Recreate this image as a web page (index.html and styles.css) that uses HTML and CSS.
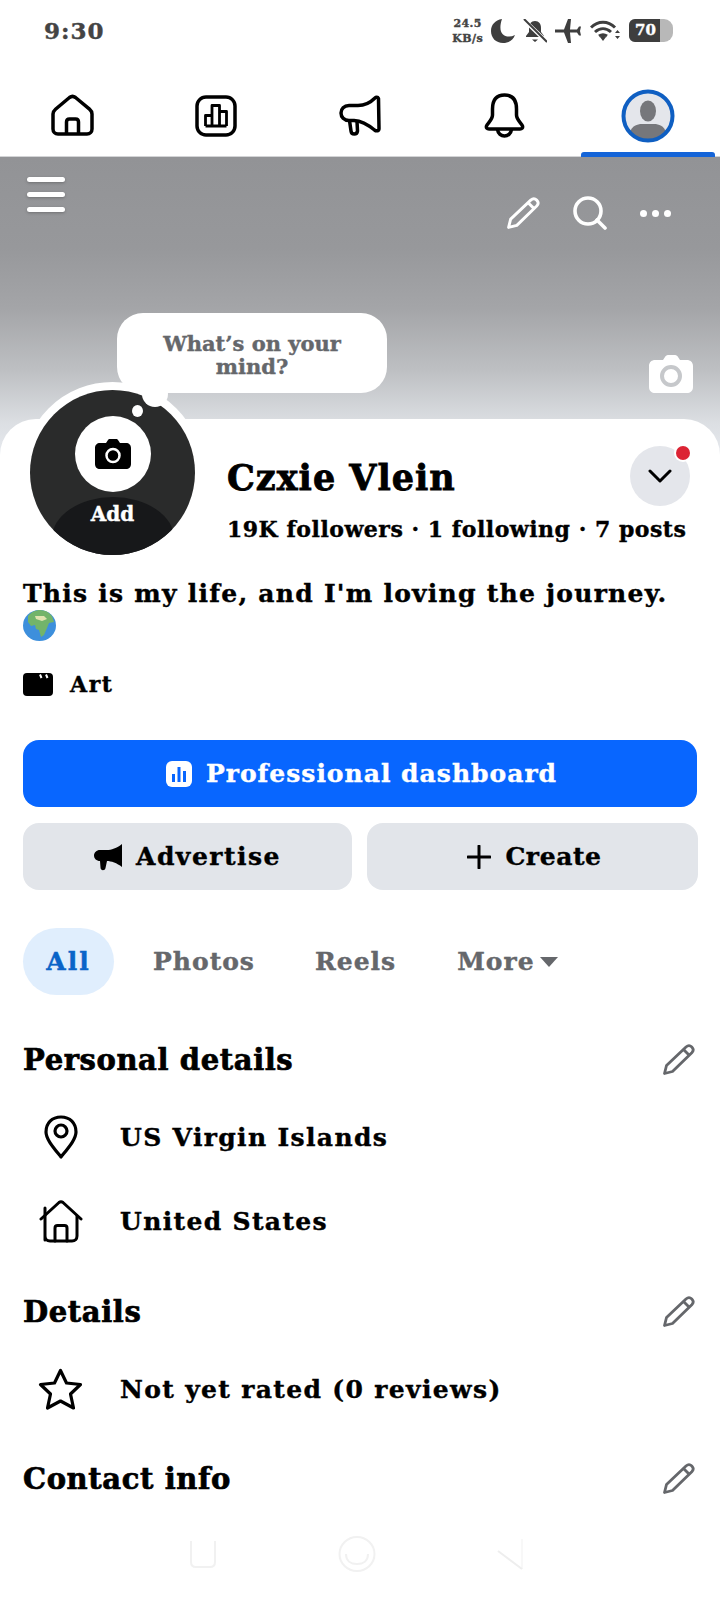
FILE: index.html
```html
<!DOCTYPE html>
<html lang="en">
<head>
  <meta charset="UTF-8">
  <title>Czxie Vlein</title>
  <link rel="stylesheet" href="styles.css">
</head>
<body>
  <svg class="defs" width="0" height="0">
    <symbol id="pencil" viewBox="0 0 33 32">
      <path d="M2.5 29.5 4.500 21.500 24 3c2-1.800 4-1.800 5.800 0s1.800 3.900 0 5.800L10.500 27.500z" fill="none" stroke="currentColor" stroke-width="2.800" stroke-linejoin="round"/>
      <path d="M21.500 5.500l6 6" fill="none" stroke="currentColor" stroke-width="2.800"/>
    </symbol>
  </svg>

  <div class="status-bar">
    <span class="clock">9:30</span>
    <div class="status-icons">
      <span class="net-speed">24.5<br>KB/s</span>
      <svg width="24" height="24" viewBox="0 0 24 24"><path d="M11 0C4 1 0 6 0 12c0 7 5 12 12 12 6 0 10-3 12-8-2 1-4 1.500-6 1.500C11 17.500 7 12 11 0z" fill="#3e3e3e"/></svg>
      <svg width="24" height="24" viewBox="0 0 24 24"><path d="M12 2c-4 0-6 3-6 7v4l-3 4v1h18v-1l-3-4V9c0-4-2-7-6-7zM9 20.500h6L12 23z" fill="#3e3e3e"/><path d="M1 1l22 21" stroke="#fff" stroke-width="4"/><path d="M1 0l23 23" stroke="#3e3e3e" stroke-width="2"/></svg>
      <svg width="27" height="24" viewBox="0 0 27 24"><path d="M0 10.500h9L13 0h3l-1 10.500h7l2-3h2l-1 4.500 1 4.500h-2l-2-3h-7L16 24h-3L9 13.500H0z" fill="#3e3e3e"/></svg>
      <svg width="31" height="22" viewBox="0 0 31 22"><path d="M1 7.500c7-7 17-7 24 0M5 12c5-4.500 11-4.500 16 0M9 16c3-2 5-2 8 0" fill="none" stroke="#3e3e3e" stroke-width="3"/><path d="M10 17l3-2 3 2-3 4zM25 13l2.500-3 2.500 3zM25 16h5l-2.500 3z" fill="#3e3e3e"/></svg>
      <span class="battery"><span class="battery-level">70</span></span>
    </div>
  </div>

  <nav class="tab-bar">
    <a class="tab">
      <svg width="43" height="43" viewBox="0 0 43 43" fill="none" stroke="#000" stroke-width="3.500" stroke-linejoin="round"><path d="M2 20c0-2 1-3.500 2.500-4.800L18.500 3.500c1.700-1.300 4.300-1.300 6 0l14 11.700c1.500 1.300 2.500 2.800 2.500 4.800v15c0 3-2 5-5 5H7c-3 0-5-2-5-5z"/><path d="M15.500 40V28c0-1.800 1.200-3 3-3h6c1.800 0 3 1.200 3 3v12"/></svg>
    </a>
    <a class="tab">
      <svg width="42" height="42" viewBox="0 0 42 42" fill="none" stroke="#000"><rect x="2" y="2" width="38" height="38" rx="9" stroke-width="3.500"/><path d="M10.500 31V20.500h6.500V31M17 31V10.500h7.500V31M24.500 31V16.500h7V31M10.500 31h21" stroke-width="2.800" stroke-linejoin="round"/></svg>
    </a>
    <a class="tab">
      <svg width="43" height="41" viewBox="0 0 43 41" fill="none" stroke="#000" stroke-width="3.500" stroke-linejoin="round"><path d="M39.500 3.500c-.8-1.500-2.500-1.500-3.500-.5-5 5-11 7.500-17 7.500H10C5 10.500 2 14 2 18s3 7.500 8 7.500h5c8 .5 15 5 20.500 9.500 2 1.500 4.500 1 4.500-1.500z"/><path d="M10.500 25.500 12 36c.5 4 6 4 6.500 0l-.5-9.800"/></svg>
    </a>
    <a class="tab">
      <svg width="41" height="45" viewBox="0 0 41 45" fill="none" stroke="#000" stroke-width="3.500" stroke-linejoin="round"><path d="M20.500 2C11 2 8.500 9 8.500 16v6c0 5-5 8-6 11-.5 1.800.5 3 2.500 3h31c2 0 3-1.200 2.500-3-1-3-6-6-6-11v-6c0-7-2.500-14-12-14z"/><path d="M13.500 36.500c1 8.500 13 8.500 14 0"/></svg>
    </a>
    <a class="tab tab-active">
      <svg width="54" height="54" viewBox="0 0 54 54"><circle cx="27" cy="27" r="24" fill="#e4e6eb"/><ellipse cx="27" cy="22" rx="8" ry="10.500" fill="#76777b"/><path d="M9 43c2-6 7-8 12-8h12c5 0 10 2 12 8-5 5-11 8-18 8S14 48 9 43z" fill="#76777b"/><circle cx="27" cy="27" r="24.500" fill="none" stroke="#0f5fc2" stroke-width="4"/></svg>
    </a>
  </nav>

  <header class="cover">
    <div class="cover-tools">
      <div class="menu-lines"><i></i><i></i><i></i></div>
      <div class="cover-actions">
        <svg class="icon-white" width="34" height="33"><use href="#pencil"/></svg>
        <svg width="34" height="34" viewBox="0 0 34 34" fill="none" stroke="#fff" stroke-width="3.600"><circle cx="15" cy="15" r="13"/><path d="M24 24l8 8" stroke-linecap="round"/></svg>
        <div class="more-dots"><i></i><i></i><i></i></div>
      </div>
    </div>
    <div class="thought-bubble">What’s on your mind?</div>
    <svg class="cover-camera" width="44" height="38" viewBox="0 0 44 38"><path d="M6 5h8l2-3c.5-1 1.500-2 3-2h7c1.500 0 2.500 1 3 2l2 3h7c3 0 6 2 6 6v21c0 4-3 6-6 6H6c-3 0-6-2-6-6V11c0-4 3-6 6-6z" fill="#fff"/><circle cx="22" cy="21" r="9" fill="none" stroke="#c6c8cb" stroke-width="4"/></svg>
  </header>

  <main class="sheet">
    <section class="profile-head">
      <div class="avatar-ring">
        <div class="avatar">
          <div class="avatar-camera">
            <svg width="36" height="30" viewBox="0 0 36 30"><path d="M5 4h6l2-3c.5-.7 1-1 2-1h6c1 0 1.500.3 2 1l2 3h6c3 0 5 2 5 5v16c0 3-2 5-5 5H5c-3 0-5-2-5-5V9c0-3 2-5 5-5z" fill="#000"/><circle cx="18" cy="16.500" r="6.500" fill="none" stroke="#fff" stroke-width="2.500"/></svg>
          </div>
          <div class="avatar-add">Add</div>
        </div>
        <span class="bubble-tail"></span>
        <span class="bubble-dot"></span>
      </div>
      <div class="profile-info">
        <div class="name-row">
          <h1 class="name">Czxie Vlein</h1>
          <div class="chevron-btn">
            <svg width="24" height="14" viewBox="0 0 24 14" fill="none" stroke="#000" stroke-width="3" stroke-linecap="round" stroke-linejoin="round"><path d="M2 2l10 10L22 2"/></svg>
            <span class="red-dot"></span>
          </div>
        </div>
        <p class="stats">19K followers · 1 following · 7 posts</p>
      </div>
    </section>

    <p class="bio">This is my life, and I'm loving the journey.
      <svg class="globe" width="33" height="31" viewBox="0 0 33 31"><ellipse cx="16.500" cy="15.500" rx="16.500" ry="15.500" fill="#3d8fdc"/><path d="M5 6c3-4 8-6 12-6 5 0 9 2 12 6l2 6-5 1-2 5-3 7-3 2-2-7-3-1-1-4-4 1-3-4z" fill="#72b46a"/><path d="M12 6h9l3 3-5 2-6-2z" fill="#dfe3b0"/></svg>
    </p>

    <div class="category">
      <svg width="30" height="23" viewBox="0 0 30 23"><rect width="30" height="23" rx="4" fill="#000"/><path d="M17 1.500l1.500 3.500M23 1.500l1.500 3.500" stroke="#fff" stroke-width="2"/></svg>
      <span>Art</span>
    </div>

    <a class="btn btn-primary">
      <svg width="26" height="26" viewBox="0 0 26 26"><rect width="26" height="26" rx="6" fill="#fff"/><path d="M6 13h3v8H6zM11.500 6h3v15h-3zM17 10h3v11h-3z" fill="#0866ff"/></svg>
      Professional dashboard
    </a>

    <div class="btn-row">
      <a class="btn btn-grey btn-wide">
        <svg width="28" height="28" viewBox="0 0 28 28"><path d="M28 1v23c-5-4-11-6-15-6H6c-3.500 0-6-2.500-6-5.500S2.500 7 6 7h7c4 0 10-2 15-6zM6 18h7l-1.500 7c-.5 3-5 3-5-.5z" fill="#000"/></svg>
        Advertise
      </a>
      <a class="btn btn-grey btn-tight">
        <svg width="24" height="24" viewBox="0 0 24 24"><path d="M12 1v22M1 12h22" stroke="#000" stroke-width="3" stroke-linecap="round"/></svg>
        Create
      </a>
    </div>

    <div class="filters">
      <a class="filter filter-on">All</a>
      <a class="filter">Photos</a>
      <a class="filter">Reels</a>
      <a class="filter filter-more">More<span class="caret"></span></a>
    </div>

    <div class="section-head section-personal">
      <h2>Personal details</h2>
      <svg class="icon-grey" width="33" height="32"><use href="#pencil"/></svg>
    </div>
    <div class="detail-row">
      <span class="detail-icon">
        <svg width="34" height="44" viewBox="0 0 34 44" fill="none" stroke="#000" stroke-width="3.200"><path d="M17 42C9 32 2 24 2 17 2 8 8 2 17 2s15 6 15 15c0 7-7 15-15 25z" stroke-linejoin="round"/><circle cx="17" cy="16" r="6"/></svg>
      </span>
      <span>US Virgin Islands</span>
    </div>
    <div class="detail-row">
      <span class="detail-icon">
        <svg width="44" height="43" viewBox="0 0 44 43" fill="none" stroke="#000" stroke-width="3" stroke-linejoin="round" stroke-linecap="round"><path d="M2 19 20 2.500c1.300-1 2.700-1 4 0L42 19"/><path d="M6 8v32M6 16v20c0 3 2 5 5 5h22c3 0 5-2 5-5V16"/><path d="M16 41V28c0-1.500 1-2.500 2.500-2.500h7c1.500 0 2.500 1 2.500 2.500v13"/></svg>
      </span>
      <span>United States</span>
    </div>

    <div class="section-head section-details">
      <h2>Details</h2>
      <svg class="icon-grey" width="33" height="32"><use href="#pencil"/></svg>
    </div>
    <div class="detail-row">
      <span class="detail-icon">
        <svg width="45" height="43" viewBox="0 0 45 43" fill="none" stroke="#000" stroke-width="3.200" stroke-linejoin="round"><path d="M22.500 2.500 28.500 15 42.500 16.500 32.500 26 35.500 40 22.500 33 9.500 40 12.500 26 2.500 16.500 16.500 15z"/></svg>
      </span>
      <span>Not yet rated (0 reviews)</span>
    </div>

    <div class="section-head section-contact">
      <h2>Contact info</h2>
      <svg class="icon-grey" width="33" height="32"><use href="#pencil"/></svg>
    </div>
  </main>

  <div class="system-nav">
    <svg width="28" height="30" viewBox="0 0 28 30" fill="none" stroke="#f1f1f1" stroke-width="2"><path d="M2 2v21c0 3 2 5 5 5h14c3 0 5-2 5-5V2"/></svg>
    <svg width="38" height="36" viewBox="0 0 38 36" fill="none" stroke="#f1f1f1" stroke-width="2"><ellipse cx="19" cy="18" rx="17.500" ry="17"/><path d="M8 18c0 7 5 10 11 10s11-3 11-10"/></svg>
    <svg width="26" height="32" viewBox="0 0 26 32" fill="none" stroke="#eeeeee" stroke-width="2"><path d="M25 1v30"  stroke="#f8f8f8"/><path d="M25 31 1 13"/></svg>
  </div>
</body>
</html>
```

FILE: styles.css
```css
body {
  margin: 0;
  width: 720px;
  height: 1600px;
  overflow: hidden;
  background: #fff;
  color: #000;
  font-family: "DejaVu Serif", "Liberation Serif", serif;
  font-weight: 700;
  -webkit-text-stroke: 0.4px currentColor;
}

h1, h2, p {
  margin: 0;
}

.defs {
  position: absolute;
}

/* status bar */
.status-bar {
  height: 61px;
  padding: 0 47px 1px 44px;
  display: flex;
  align-items: center;
  justify-content: space-between;
}

.clock {
  font-size: 23px;
  letter-spacing: 1px;
  color: #444;
}

.status-icons {
  display: flex;
  align-items: center;
  gap: 8px;
}

.net-speed {
  font-size: 11px;
  line-height: 15px;
  letter-spacing: 0.4px;
  text-align: center;
  color: #444;
}

.battery {
  width: 44px;
  height: 23px;
  border-radius: 6px 9px 9px 6px;
  background: #b8b8b8;
  overflow: hidden;
  display: block;
}

.battery-level {
  display: block;
  width: 31px;
  height: 23px;
  padding-left: 6px;
  box-sizing: border-box;
  background: #3e3e3e;
  color: #fff;
  font-size: 15px;
  line-height: 23px;
  white-space: nowrap;
}

/* top tabs */
.tab-bar {
  height: 94px;
  display: grid;
  grid-template-columns: repeat(5, 1fr);
  border-bottom: 1px solid #d3d4d6;
}

.tab {
  position: relative;
  display: flex;
  align-items: center;
  justify-content: center;
  padding-top: 13px;
}

.tab-active::after {
  content: "";
  position: absolute;
  left: 5px;
  right: 5px;
  bottom: -1px;
  height: 5px;
  border-radius: 3px 3px 0 0;
  background: #1464d8;
}

/* cover */
.cover {
  position: relative;
  height: 303px;
  background: linear-gradient(#929396 0, #97989b 30%, #a4a5a8 50%, #bdbfc2 70%, #dcdfe3 88%, #e8ebf0 100%);
}

.cover-tools {
  display: flex;
  justify-content: space-between;
  padding: 20px 49px 0 27px;
}

.menu-lines i {
  display: block;
  width: 38px;
  height: 5px;
  margin-bottom: 10px;
  border-radius: 3px;
  background: #fff;
  box-shadow: 0 1px 3px rgba(0,0,0,0.25);
}

.cover-actions {
  display: flex;
  align-items: center;
  gap: 33px;
  margin-top: 19px;
}

.icon-white {
  color: #fff;
}

.icon-grey {
  color: #65676b;
}

.more-dots {
  display: flex;
  gap: 5px;
}

.more-dots i {
  width: 7px;
  height: 7px;
  border-radius: 50%;
  background: #fff;
}

.thought-bubble {
  position: absolute;
  left: 117px;
  top: 156px;
  width: 270px;
  height: 80px;
  padding: 4px 38px 0;
  box-sizing: border-box;
  display: flex;
  align-items: center;
  text-align: center;
  border-radius: 26px;
  background: #fff;
  color: #65676b;
  font-size: 21px;
  line-height: 23px;
}

.cover-camera {
  position: absolute;
  left: 649px;
  top: 198px;
}

/* white sheet */
.sheet {
  position: relative;
  margin-top: -41px;
  padding: 0 23px;
  border-radius: 36px 36px 0 0;
  background: #fff;
}

.sheet::before {
  content: "";
  display: block;
  height: 0.1px;
}

.profile-head {
  display: flex;
  gap: 24px;
  margin-top: -37px;
}

.avatar-ring {
  position: relative;
  flex: none;
  width: 165px;
  height: 165px;
  margin-left: -1px;
  border: 8px solid #fff;
  border-radius: 50%;
  background: #fff;
}

.avatar {
  width: 165px;
  height: 165px;
  border-radius: 50%;
  overflow: hidden;
  background: #2a2b2b;
  display: flex;
  flex-direction: column;
  align-items: center;
  padding-top: 26px;
  box-sizing: border-box;
}

.avatar-camera {
  flex: none;
  width: 76px;
  height: 76px;
  border-radius: 50%;
  background: #fff;
  display: flex;
  align-items: center;
  justify-content: center;
}

.avatar-add {
  flex: none;
  width: 122px;
  height: 80px;
  margin-top: 5px;
  padding-top: 3px;
  border-radius: 50%;
  background: #17181a;
  color: #fff;
  font-size: 20px;
  line-height: 28px;
  text-align: center;
}

.bubble-tail {
  position: absolute;
  left: 112px;
  top: -9px;
  width: 26px;
  height: 26px;
  border-radius: 50%;
  background: #fff;
}

.bubble-dot {
  position: absolute;
  left: 102px;
  top: 15px;
  width: 11px;
  height: 12px;
  border-radius: 50%;
  background: #fff;
}

.profile-info {
  flex: 1;
  min-width: 0;
  padding-top: 64px;
}

.name-row {
  display: flex;
  align-items: center;
  justify-content: space-between;
  margin-right: 7px;
}

.name {
  padding-top: 3px;
  font-size: 35px;
  line-height: 57px;
  letter-spacing: 1px;
  -webkit-text-stroke: 0.8px currentColor;
}

.chevron-btn {
  position: relative;
  width: 60px;
  height: 60px;
  border-radius: 50%;
  background: #e4e6eb;
  display: flex;
  align-items: center;
  justify-content: center;
}

.red-dot {
  position: absolute;
  right: 0;
  top: 0;
  width: 14px;
  height: 14px;
  border-radius: 50%;
  background: #dc2434;
  box-shadow: 0 0 0 2px #fff;
}

.stats {
  margin-top: 9px;
  font-size: 22px;
  line-height: 28px;
  letter-spacing: 0.5px;
  white-space: nowrap;
}

.bio {
  margin-top: 15px;
  font-size: 25px;
  line-height: 32px;
  letter-spacing: 1.25px;
}

.globe {
  display: block;
}

.category {
  display: flex;
  align-items: center;
  gap: 17px;
  margin-top: 31px;
  font-size: 22px;
  line-height: 24px;
  letter-spacing: 1.6px;
}

/* buttons */
.btn {
  display: flex;
  align-items: center;
  justify-content: center;
  gap: 14px;
  height: 67px;
  border-radius: 16px;
  font-size: 25px;
  letter-spacing: 1px;
}

.btn-primary {
  margin-top: 44px;
  padding-left: 3px;
  background: #0866ff;
  color: #fff;
}

.btn-row {
  display: grid;
  grid-template-columns: 329px 331px;
  gap: 15px;
  margin-top: 16px;
}

.btn-grey {
  background: #e2e5ea;
}

.btn-wide {
  letter-spacing: 1.5px;
}

.btn-tight {
  padding-left: 4px;
  letter-spacing: 0.6px;
}

/* filter chips */
.filters {
  display: flex;
  align-items: center;
  height: 67px;
  margin-top: 38px;
  font-size: 25px;
  letter-spacing: 1px;
  color: #65676b;
}

.filter {
  display: block;
}

.filter-on {
  width: 91px;
  height: 67px;
  margin-right: 39px;
  border-radius: 34px;
  background: #e0eefd;
  color: #0a64c8;
  line-height: 67px;
  letter-spacing: 2px;
  text-align: center;
}

.filter:nth-child(2) {
  margin-right: 60px;
}

.filter:nth-child(3) {
  margin-right: 61px;
}

.caret {
  display: inline-block;
  width: 0;
  height: 0;
  margin-left: 5px;
  border: 9px solid transparent;
  border-top: 10px solid #65676b;
  border-bottom: 0;
  vertical-align: 3px;
}

/* detail sections */
.section-head {
  display: flex;
  align-items: center;
  justify-content: space-between;
  height: 40px;
  padding-right: 2px;
}

.section-head h2 {
  font-size: 29px;
  letter-spacing: 0.6px;
  -webkit-text-stroke: 0.7px currentColor;
}

.section-personal {
  margin-top: 45px;
  margin-bottom: 15px;
}

.section-details {
  margin-top: 29px;
  margin-bottom: 15px;
}

.section-contact {
  margin-top: 28px;
}

.detail-row {
  display: flex;
  align-items: center;
  height: 84px;
  font-size: 25px;
  letter-spacing: 1.35px;
}

.detail-icon {
  flex: none;
  width: 45px;
  margin: 0 37px 0 15px;
  display: flex;
  justify-content: center;
}

/* android nav */
.system-nav {
  display: flex;
  align-items: center;
  gap: 121px;
  padding-left: 189px;
  margin-top: 37px;
}
```
